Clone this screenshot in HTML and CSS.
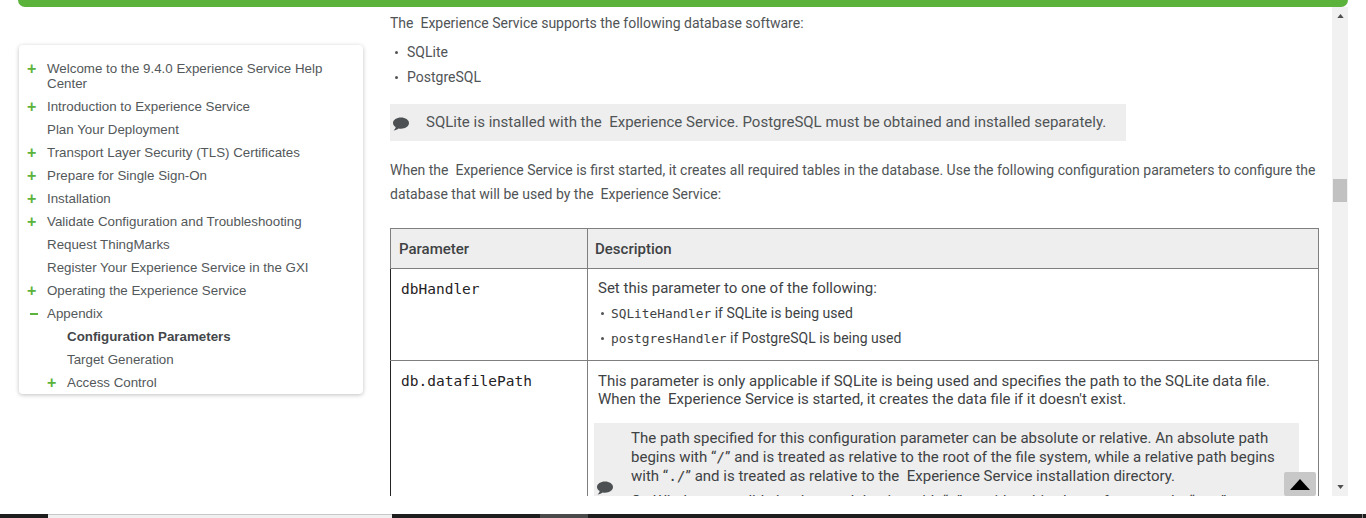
FILE: index.html
```html
<!DOCTYPE html>
<html lang="en">
<head>
<meta charset="utf-8">
<title>Configuration Parameters</title>
<link rel="stylesheet" href="styles.css">
</head>
<body>
<div class="page">
  <div class="topbar"></div>
  <div class="main">
    <nav class="toc">
      <ul class="toc-list">
        <li class="toc-item"><span class="mark">+</span><span>Welcome to the 9.4.0 Experience Service Help Center</span></li>
        <li class="toc-item"><span class="mark">+</span><span>Introduction to Experience Service</span></li>
        <li class="toc-item"><span class="mark"></span><span>Plan Your Deployment</span></li>
        <li class="toc-item"><span class="mark">+</span><span>Transport Layer Security (TLS) Certificates</span></li>
        <li class="toc-item"><span class="mark">+</span><span>Prepare for Single Sign-On</span></li>
        <li class="toc-item"><span class="mark">+</span><span>Installation</span></li>
        <li class="toc-item"><span class="mark">+</span><span>Validate Configuration and Troubleshooting</span></li>
        <li class="toc-item"><span class="mark"></span><span>Request ThingMarks</span></li>
        <li class="toc-item"><span class="mark"></span><span>Register Your Experience Service in the GXI</span></li>
        <li class="toc-item"><span class="mark">+</span><span>Operating the Experience Service</span></li>
        <li class="toc-item"><span class="mark minus"><i class="dash"></i></span><span>Appendix</span></li>
        <li class="toc-item sub current"><span class="mark"></span><span>Configuration Parameters</span></li>
        <li class="toc-item sub"><span class="mark"></span><span>Target Generation</span></li>
        <li class="toc-item sub"><span class="mark">+</span><span>Access Control</span></li>
      </ul>
    </nav>
    <div class="content">
      <p class="intro">The &nbsp;Experience Service supports the following database software:</p>
      <ul class="bullets top-bullets">
        <li>SQLite</li>
        <li>PostgreSQL</li>
      </ul>
      <div class="note top-note">
        <svg class="bubble" viewBox="0 0 16 14"><path d="M8 .5C3.6.5 0 2.900 0 6c0 1.700 1 3.100 2.700 4.100C2.500 11.400 1.500 12.700.6 13.500c1.900-.1 3.700-.9 5-2 .8.100 1.600.2 2.400.2 4.400 0 8-2.600 8-5.700S12.400.5 8 .5z"/></svg>
        <span>SQLite is installed with the &nbsp;Experience Service. PostgreSQL must be obtained and installed separately.</span>
      </div>
      <p class="para">When the &nbsp;Experience Service is first started, it creates all required tables in the database. Use the following configuration parameters to configure the database that will be used by the &nbsp;Experience Service:</p>
      <table class="params">
        <thead>
          <tr><th class="col-a">Parameter</th><th class="col-b">Description</th></tr>
        </thead>
        <tbody>
          <tr class="row-first">
            <td class="name"><code>dbHandler</code></td>
            <td class="desc">
              <p class="lead">Set this parameter to one of the following:</p>
              <ul class="bullets cell-bullets">
                <li><code class="small">SQLiteHandler</code> if SQLite is being used</li>
                <li><code class="small">postgresHandler</code> if PostgreSQL is being used</li>
              </ul>
            </td>
          </tr>
          <tr>
            <td class="name"><code>db.datafilePath</code></td>
            <td class="desc">
              <p class="lead">This parameter is only applicable if SQLite is being used and specifies the path to the SQLite data file. When the &nbsp;Experience Service is started, it creates the data file if it doesn't exist.</p>
              <div class="note cell-note">
                <svg class="bubble" viewBox="0 0 16 14"><path d="M8 .5C3.6.5 0 2.900 0 6c0 1.700 1 3.100 2.700 4.100C2.500 11.400 1.500 12.700.6 13.500c1.900-.1 3.700-.9 5-2 .8.100 1.600.2 2.400.2 4.400 0 8-2.600 8-5.700S12.400.5 8 .5z"/></svg>
                <div class="note-body">
                  <p>The path specified for this configuration parameter can be absolute or relative. An absolute path begins with “<code class="slash">/</code>” and is treated as relative to the root of the file system, while a relative path begins with “<code class="slash">./</code>” and is treated as relative to the &nbsp;Experience Service installation directory.</p>
                  <p>On Windows, a valid absolute path begins with “<code class="slash">/</code>” or with a drive letter, for example, “<code class="slash">c:/</code>”.</p>
                </div>
              </div>
            </td>
          </tr>
        </tbody>
      </table>
      <button class="to-top" type="button" aria-label="Back to top"><svg viewBox="0 0 22 12"><path d="M11 0l11 12H0z"/></svg></button>
    </div>
    <div class="scrollbar">
      <svg class="arrow" viewBox="0 0 8 5"><path d="M4 0l4 5H0z"/></svg>
      <div class="thumb"></div>
      <svg class="arrow" viewBox="0 0 8 5"><path d="M0 0h8L4 5z"/></svg>
    </div>
  </div>
  <div class="taskstrip">
    <div class="seg dark s1"></div>
    <div class="seg light s2"></div>
    <div class="seg dark s3"></div>
    <div class="seg gray s4"></div>
    <div class="seg dark s5"></div>
    <div class="seg gray s6"></div>
    <div class="seg dark s7"></div>
  </div>
</div>
</body>
</html>
```
FILE: styles.css
```css
* { box-sizing: border-box; }
html, body { margin: 0; padding: 0; height: 100%; overflow: hidden; background: #fff; }
.page { width: 1366px; height: 518px; display: flex; flex-direction: column; font-family: Roboto, "Liberation Sans", sans-serif; color: #505456; }
.topbar { height: 7px; margin: 0 18px; background: #5cb33c; border-radius: 0 0 8px 8px; flex: none; }
.main { height: 489px; flex: none; display: flex; align-items: flex-start; padding-left: 19px; margin-right: 18px; }
.toc { width: 344px; height: 349px; margin-top: 38px; flex: none; background: #fff; border-radius: 4px; box-shadow: 0 1px 4px rgba(0,0,0,.25); padding-top: 16px; font-family: "Liberation Sans", Arial, sans-serif; font-size: 13.33px; line-height: 15px; color: #53585a; }
.toc-list { list-style: none; margin: 0; padding: 0; }
.toc-item { display: flex; padding: 0 30px 8px 8px; }
.toc-item.sub { padding-left: 28px; }
.toc-item.current { font-weight: 700; color: #44474a; }
.mark { width: 20px; flex: none; color: #5cb33c; font-weight: 700; font-size: 16px; line-height: 15px; }
.minus { display: flex; align-items: center; padding-left: 3px; }
.dash { width: 8px; height: 2px; background: #5cb33c; display: block; }
.content { width: 942px; height: 489px; margin-left: 27px; flex: none; overflow: hidden; position: relative; font-size: 14px; }
.intro { margin: 8px 0 0; line-height: 16px; }
.bullets { list-style: none; margin: 0; padding: 0; }
.bullets li { position: relative; padding-left: 17px; line-height: 25px; }
.bullets li::before { content: ""; position: absolute; left: 5px; top: 11px; width: 3px; height: 3px; border-radius: 50%; background: #505456; }
.top-bullets { margin-top: 9px; }
.top-note { margin-top: 14px; width: 736px; height: 37px; padding: 0 0 2px 3px; display: flex; align-items: center; background: #eeeeee; font-size: 15px; }
.bubble { width: 16px; height: 14px; fill: #4c5052; flex: none; }
.top-note .bubble { margin-right: 17px; margin-top: 4px; }
.para { margin: 17px 0 0; width: 929px; line-height: 24px; }
.params { border-collapse: collapse; width: 929px; margin-top: 22px; font-size: 15px; color: #3e4244; }
.params th { background: #eeeeee; border: 1px solid #7f7f7f; height: 40px; padding: 0 8px; text-align: left; font-weight: 500; font-size: 15px; color: #3f4244; }
.params .col-a { width: 197px; }
.params .col-b { padding-left: 7px; }
.params td { border: 1px solid #7f7f7f; padding: 0; vertical-align: top; }
.params td.name { border-left-color: #222; padding: 11px 10px; }
code { font-family: "DejaVu Sans Mono", "Liberation Mono", monospace; font-size: 14.5px; color: #1f2224; }
code.small { font-size: 12.8px; color: #3e4244; }
code.slash { font-size: 14.5px; color: #3e4244; }
.params td.desc { padding: 11px 10px 9px; }
.params .row-first td.desc { padding-top: 10px; }
.lead { margin: 0; padding-right: 20px; line-height: 18px; }
.cell-bullets { margin-top: 4px; font-size: 14px; }
.cell-bullets li { padding-left: 13px; }
.cell-bullets li::before { left: 3px; }
.cell-note { margin: 15px 9px 0 -4px; min-height: 130px; display: flex; align-items: center; background: #eeeeee; padding: 6px 12px 6px 3px; }
.cell-note .bubble { margin-right: 18px; }
.note-body { align-self: flex-start; }
.note-body p { margin: 0 0 6px; line-height: 19px; }
.to-top { position: absolute; right: 16px; bottom: 0; width: 32px; height: 24px; padding: 0; border: 0; border-radius: 2px; background: #c8c8c8; display: flex; align-items: center; justify-content: center; }
.to-top svg { width: 20px; height: 11px; fill: #000; }
.scrollbar { width: 16px; height: 489px; flex: none; background: #f1f1f1; display: flex; flex-direction: column; align-items: center; justify-content: space-between; padding: 7px 0; position: relative; }
.arrow { width: 7px; height: 4px; fill: #505050; }
.thumb { position: absolute; left: 1px; top: 172px; width: 14px; height: 23px; background: #c1c1c1; }
.taskstrip { height: 4px; margin-top: 18px; flex: none; display: flex; }
.seg { height: 4px; }
.dark { background: #1e1e1e; }
.light { background: #f0f0f0; border-top: 1px solid #c8c8c8; }
.gray { background: #4a4a4a; }
.s1 { width: 48px; }
.s2 { width: 344px; }
.s3 { width: 148px; }
.s4 { width: 48px; }
.s5 { width: 774px; }
.s6 { width: 1px; background: #8a8a8a; }
.s7 { flex: 1; }
```
